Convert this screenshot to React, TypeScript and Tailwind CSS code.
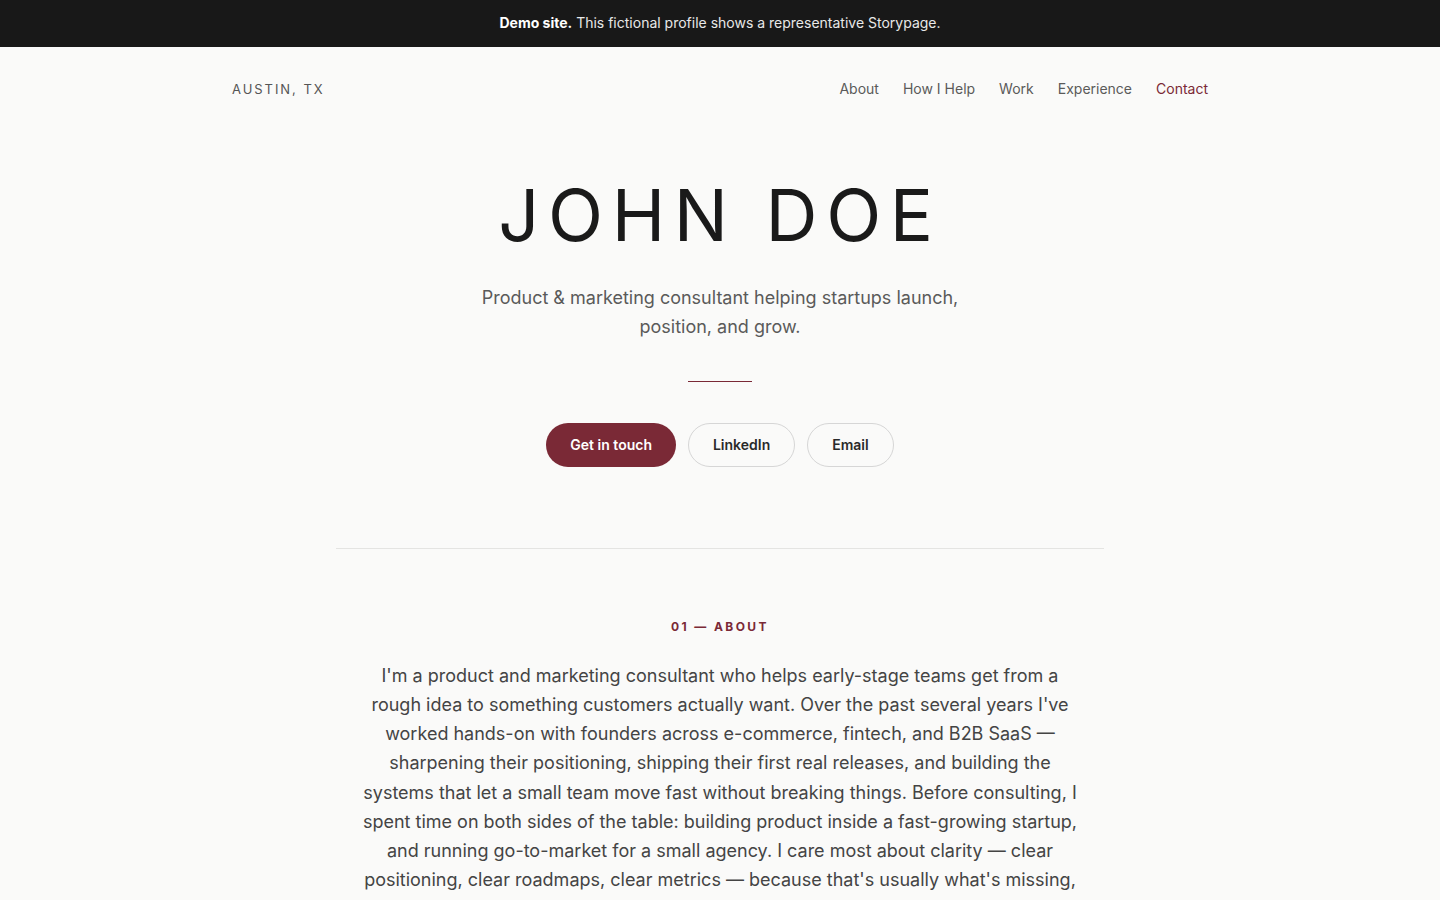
import React from 'react';

const navLinks = ['About', 'How I Help', 'Work', 'Experience'];

export default function App() {
  return (
    <div className="min-h-screen bg-[#fafaf9] text-[#1a1a1a] font-['Inter',sans-serif]">
      {/* Demo banner */}
      <div className="bg-[#181818] h-[47px] pb-[2px] flex items-center justify-center text-[14px] text-[#e8e8e8]">
        <p>
          <span className="font-bold text-white">Demo site.</span> This fictional profile shows a representative Storypage.
        </p>
      </div>

      {/* Nav */}
      <header className="max-w-5xl mx-auto px-6 pt-8 pb-8 flex items-center justify-between">
        <span className="text-[13px] tracking-[0.15em] text-[#555] leading-5">AUSTIN, TX</span>
        <nav className="flex items-center gap-6 text-[14px] leading-5 text-[#5a5a5a]">
          {navLinks.map((l) => (
            <a key={l} href="#" className="hover:text-[#7a2936]">{l}</a>
          ))}
          <a href="#" className="text-[#7a2936]">Contact</a>
        </nav>
      </header>

      <main>
        {/* Hero */}
        <section className="flex flex-col items-center text-center pt-12 pb-[81px] px-6">
          <h1 className="text-[72px] leading-none font-normal tracking-[0.12em] text-[#1a1a1a]">JOHN DOE</h1>
          <p className="mt-8 max-w-[500px] text-lg leading-relaxed text-[#5a5a5a]">
            Product &amp; marketing consultant helping startups launch, position, and grow.
          </p>
          <div className="mt-[39px] w-16 h-px bg-[#7a2936]" />
          <div className="mt-[41px] flex items-center gap-3">
            <a href="#" className="h-11 px-6 rounded-full bg-[#7a2936] text-white text-[14px] font-semibold flex items-center">Get in touch</a>
            <a href="#" className="h-11 px-6 rounded-full border border-[#d6d6d6] text-[#2a2a2a] text-[14px] font-semibold flex items-center">LinkedIn</a>
            <a href="#" className="h-11 px-6 rounded-full border border-[#d6d6d6] text-[#2a2a2a] text-[14px] font-semibold flex items-center">Email</a>
          </div>
        </section>

        <div className="max-w-3xl mx-auto border-t border-[#e4e4e2]" />

        {/* About */}
        <section className="max-w-3xl mx-auto px-6 pt-[68px] pb-20 text-center">
          <h2 className="text-[12px] leading-5 font-bold tracking-[0.2em] text-[#7a2936]">01 — ABOUT</h2>
          <p className="mt-6 text-lg leading-relaxed text-[#444]">
            I'm a product and marketing consultant who helps early-stage teams get from a rough idea to something
            customers actually want. Over the past several years I've worked hands-on with founders across
            e-commerce, fintech, and B2B SaaS — sharpening their positioning, shipping their first real releases,
            and building the systems that let a small team move fast without breaking things. Before consulting, I
            spent time on both sides of the table: building product inside a fast-growing startup, and running
            go-to-market for a small agency. I care most about clarity — clear positioning, clear roadmaps, clear
            metrics — because that's usually what's missing, and it's what turns effort into momentum.
          </p>
        </section>
      </main>
    </div>
  );
}
